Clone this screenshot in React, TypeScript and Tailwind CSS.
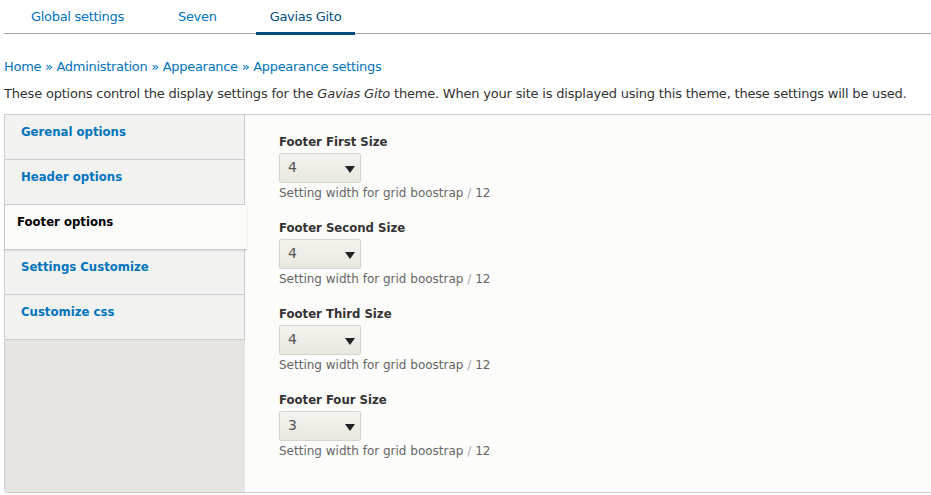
import { useState } from "react"

const tabs = ["Global settings", "Seven", "Gavias Gito"]

const menu = [
  "Gerenal options",
  "Header options",
  "Footer options",
  "Settings Customize",
  "Customize css",
]

const fields = [
  { label: "Footer First Size", value: "4" },
  { label: "Footer Second Size", value: "4" },
  { label: "Footer Third Size", value: "4" },
  { label: "Footer Four Size", value: "3" },
]

const boldFont = "[font-family:'DejaVu_Sans_Condensed','DejaVu_Sans',sans-serif] font-bold tracking-normal"

function SizeSelect({ value }: { value: string }) {
  return (
    <div className="mt-[2px] flex h-[30px] w-[82px] items-center justify-between rounded-[2px] border border-[#d5d4cd] bg-gradient-to-b from-[#f4f3ee] to-[#e8e7e0] pl-[8px] pr-[5px] text-[14px] tracking-normal text-[#555]">
      <span className="-mt-[2px]">{value}</span>
      <svg width="10" height="7" viewBox="0 0 10 7" className="mt-[2px]">
        <path d="M0 0h10L5 7z" fill="#222" />
      </svg>
    </div>
  )
}

export default function App() {
  const [active] = useState(2)

  return (
    <div className="min-h-[495px] bg-white pl-[4px] text-[13px] leading-[18px] tracking-[-0.3px] text-[#333] [font-family:'DejaVu_Sans',sans-serif]">
      {/* top tabs */}
      <div className="flex h-[34px] border-b border-[#a6a6a6]">
        {tabs.map((t, i) => (
          <div
            key={t}
            className={
              "relative pt-[8px] " +
              (i === 2 ? "pl-[26px] pr-[27px] text-[#004f80]" : "px-[27px] text-[#0074bd]")
            }
          >
            {t}
            {i === 2 && <div className="absolute -bottom-[2px] left-[12px] right-[13px] h-[3px] bg-[#004f80]" />}
          </div>
        ))}
      </div>

      <div className="mt-[24px] text-[#0074bd]">
        Home » Administration » Appearance » Appearance settings
      </div>
      <p className="mt-[9px] whitespace-nowrap tracking-[-0.2px]">
        These options control the display settings for the <em>Gavias Gito</em> theme. When your
        site is displayed using this theme, these settings will be used.
      </p>

      {/* vertical tabs */}
      <div className="mt-[11px] flex h-[379px] rounded-bl-[4px] border border-r-0 border-[#ccc]">
        <div className="w-[240px] shrink-0 bg-[#e6e5e1]">
          {menu.map((m, i) =>
            i === active ? (
              <div
                key={m}
                className={
                  "relative z-10 -mr-[2px] h-[45px] border-b border-[#ccc] bg-[#fcfcfa] pl-[12px] pt-[8px] text-black shadow-[0_1px_2px_rgba(0,0,0,0.12)] " +
                  boldFont
                }
              >
                {m}
              </div>
            ) : (
              <div
                key={m}
                className={
                  "h-[45px] border-b border-r border-[#ccc] bg-[#f2f2f0] pl-[16px] pt-[8px] text-[#0074bd] " +
                  boldFont
                }
              >
                {m}
              </div>
            )
          )}
        </div>
        <div className="flex-1 bg-[#fcfcfa] pl-[34px] pt-[18px]">
          {fields.map((f) => (
            <div key={f.label} className="mb-[18px]">
              <div className={"text-[#333] " + boldFont}>{f.label}</div>
              <SizeSelect value={f.value} />
              <div className="mt-[2px] text-[12px] leading-[16px] tracking-normal text-[#666]">
                Setting width for grid boostrap <span className="text-[#aaa]">/</span> 12
              </div>
            </div>
          ))}
        </div>
      </div>
    </div>
  )
}
